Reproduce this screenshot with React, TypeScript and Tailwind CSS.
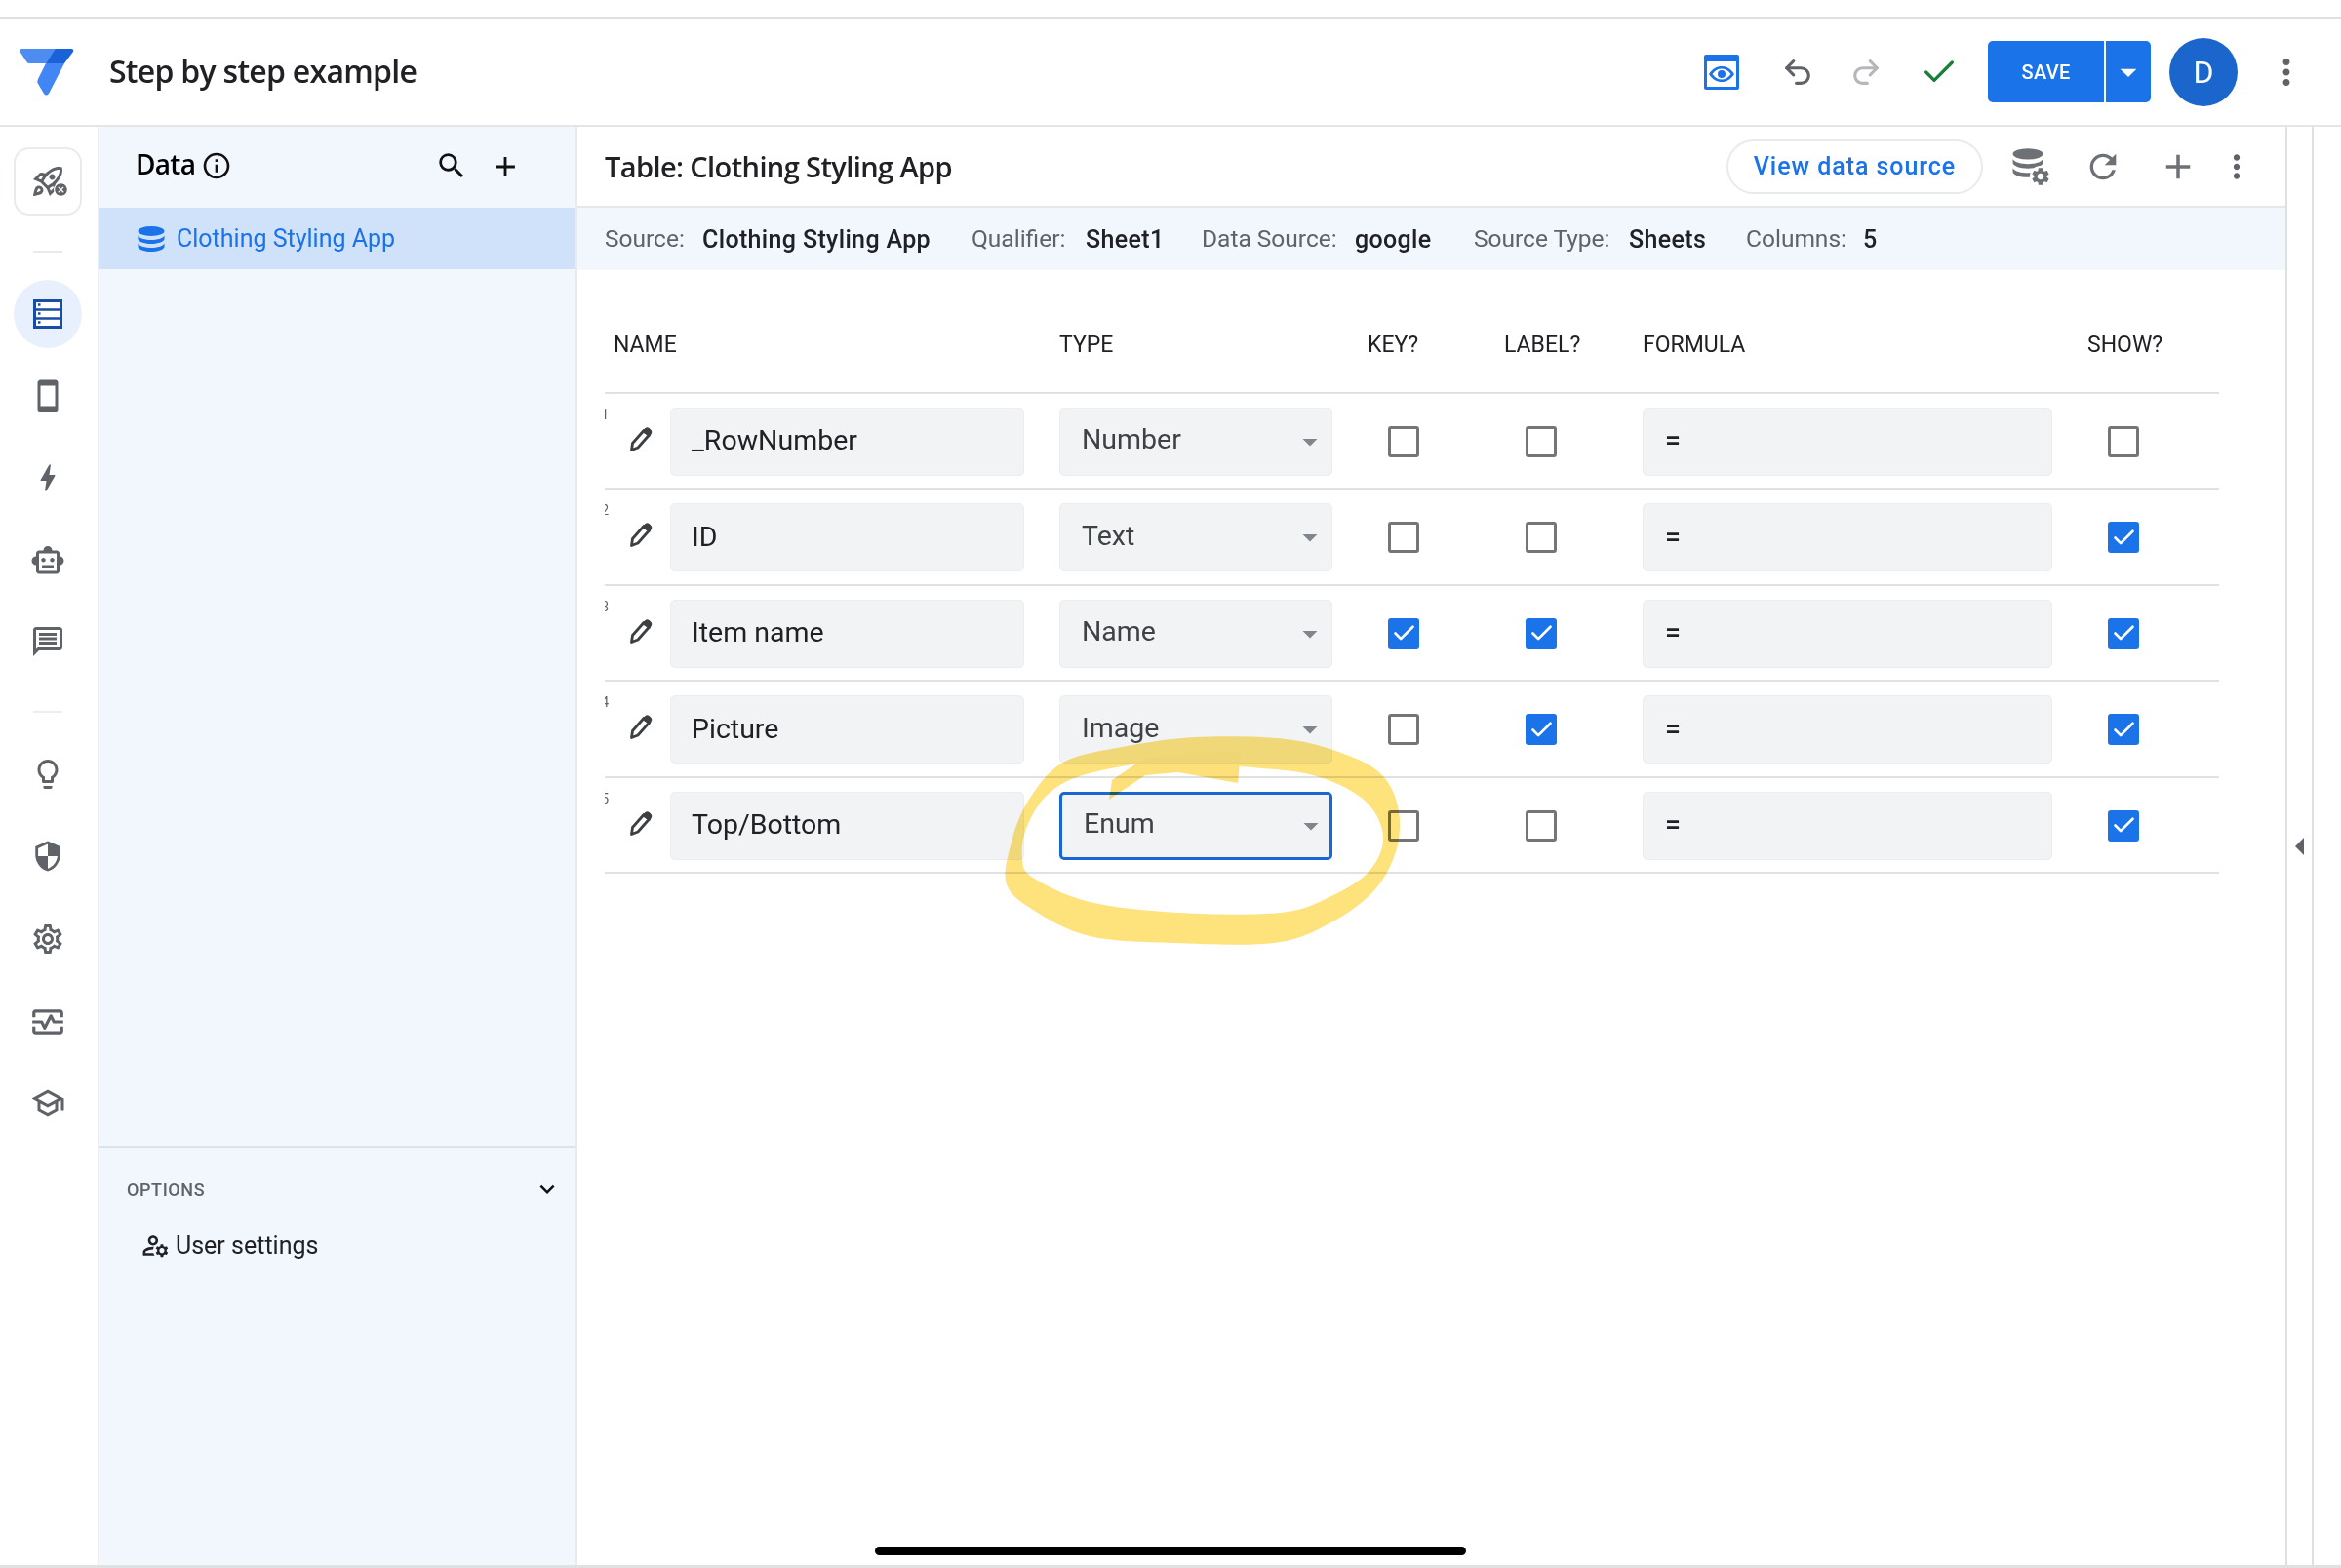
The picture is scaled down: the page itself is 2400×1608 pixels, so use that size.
import React from "react";
import { Undo2, Redo2, Check } from "lucide-react";
import {
  MdSearch, MdAdd, MdMoreVert, MdOutlineLightbulb, MdSecurity, MdOutlineSettings, MdOutlineMonitorHeart,
  MdOutlineSchool, MdOutlineSmartToy, MdOutlineMessage, MdBolt, MdInfoOutline, MdRefresh, MdArrowDropDown,
  MdOutlineSmartphone, MdOutlineRocketLaunch, MdOutlineManageAccounts, MdKeyboardArrowDown, MdCancel, MdSettings,
} from "react-icons/md";

function smooth(p: number[][]) {
  const n = p.length;
  let d = `M${p[0][0]} ${p[0][1]}`;
  for (let i = 0; i < n; i++) {
    const a = p[(i - 1 + n) % n], b = p[i], c = p[(i + 1) % n], e = p[(i + 2) % n];
    d += ` C${b[0] + (c[0] - a[0]) / 6} ${b[1] + (c[1] - a[1]) / 6} ${c[0] - (e[0] - b[0]) / 6} ${c[1] - (e[1] - b[1]) / 6} ${c[0]} ${c[1]}`;
  }
  return d + "Z";
}
const outer = [[1145,767],[1226,756],[1318,758],[1375,772],[1415,793],[1433,827],[1432,870],[1409,913],[1363,947],[1306,967],[1203,967],[1117,960],[1059,933],[1032,907],[1036,867],[1053,823],[1088,783]];
const inner = [[1117,793],[1076,813],[1053,847],[1048,880],[1059,900],[1117,925],[1208,936],[1312,936],[1363,920],[1404,893],[1418,857],[1398,820],[1346,795],[1272,786],[1200,780]];

function Highlight() {
  return (
    <svg className="absolute left-0 top-0 pointer-events-none mix-blend-multiply" width="2400" height="1608">
      <path d={smooth(outer) + " " + smooth(inner)} fill="#fee27c" fillRule="evenodd" />
      <path d="M1137 820 L1140 800 L1174 777 L1272 770 L1269 803 L1208 792 L1174 795 Z" fill="#fde07a" />
    </svg>
  );
}

function Logo() {
  return (
    <svg width="56" height="50" viewBox="0 0 56 50">
      <path d="M2 1 H38 L27 16 H10 Q8 16 7 14 L0.500 4 Q0 1 2 1Z" fill="#4d8cf0" />
      <path d="M27 16 H46 L30 47 Q27 50 25 47 L18.500 36 Q18 34 19 32 Z" fill="#4285f4" />
      <path d="M37 1 H53 Q56 1 55 4 L46 16 H27 Z" fill="#1a62d8" />
    </svg>
  );
}

function Pencil() {
  return (
    <svg width="24" height="26" viewBox="0 0 24 26" className="ml-[25px] -mt-[4px]">
      <path d="M2.500 23.500 L3.500 16.500 L15 3.500 L20.500 8 L9 21 Z" fill="#fff" stroke="#3c4043" strokeWidth="2.800" strokeLinejoin="round" />
      <path d="M14 4.500 L17 1.500 Q18.500 0.500 20 1.500 L22 3.500 Q23 5 22 6.500 L20.500 9 Z" fill="#3c4043" stroke="#3c4043" strokeWidth="1.500" strokeLinejoin="round" />
    </svg>
  );
}

function NavItem({ children, active }: { children: React.ReactNode; active?: boolean }) {
  return (
    <div className={`h-[70px] w-[70px] flex items-center justify-center rounded-full ${active ? "bg-[#e8f0fe]" : ""}`}>
      {children}
    </div>
  );
}

function TableIcon() {
  return (
    <svg width="30" height="30" viewBox="0 0 30 30">
      <rect x="1.5" y="1.5" width="27" height="27" fill="#fff" stroke="#174ea6" strokeWidth="3" />
      <path d="M1 10.5H29M1 19.5H29" stroke="#174ea6" strokeWidth="2.5" />
      <path d="M5 5.5h2.5M5 14.5h2.5M5 23.5h2.5" stroke="#174ea6" strokeWidth="2.5" />
    </svg>
  );
}

function Db({ color, w = 28, h = 26 }: { color: string; w?: number; h?: number }) {
  return (
    <svg width={w} height={h} viewBox="0 0 28 26" fill={color}>
      <ellipse cx="14" cy="5" rx="13.5" ry="5" />
      <path d="M.5 9.5C2 12.5 8 14 14 14s12-1.500 13.500-4.500V13c0 2.500-6 5-13.500 5S.5 15.500.5 13Z" />
      <path d="M.5 17.500C2 20.500 8 22 14 22s12-1.500 13.500-4.500V21c0 2.500-6 5-13.500 5S.5 23.500.5 21Z" />
    </svg>
  );
}

type Row = { n: string; name: string; type: string; key: boolean; label: boolean; show: boolean; focus?: boolean };
const rows: Row[] = [
  { n: "1", name: "_RowNumber", type: "Number", key: false, label: false, show: false },
  { n: "2", name: "ID", type: "Text", key: false, label: false, show: true },
  { n: "3", name: "Item name", type: "Name", key: true, label: true, show: true },
  { n: "4", name: "Picture", type: "Image", key: false, label: true, show: true },
  { n: "5", name: "Top/Bottom", type: "Enum", key: false, label: false, show: true, focus: true },
];

function Box({ on }: { on: boolean }) {
  return on ? (
    <div className="ml-[21px] h-[32px] w-[32px] rounded-[3px] bg-[#1a73e8] flex items-center justify-center">
      <Check size={27} color="#fff" strokeWidth={2.4} />
    </div>
  ) : (
    <div className="ml-[21px] h-[32px] w-[32px] rounded-[3px] border-[3px] border-[#757575]" />
  );
}

function Field({ children, className = "", focus }: { children: React.ReactNode; className?: string; focus?: boolean }) {
  return (
    <div className={`h-[70px] flex items-center rounded-[5px] bg-[#f1f3f4] text-[28.5px] ${focus ? "border-[3px] border-[#1a66d2]" : "border border-[#ebedef]"} ${className}`}>
      {children}
    </div>
  );
}

function TableRow({ r }: { r: Row }) {
  return (
    <div className="grid grid-cols-[67px_399px_316px_141px_141px_456px_1fr] items-center h-[98.5px] pt-[2px] border-b-2 border-[#dfe1e3]">
      <div className="h-full relative flex items-center">
        <span className="absolute left-0 top-[10px] w-[4px] overflow-hidden text-[14px] leading-[18px] text-[#5f6368] flex justify-end">{r.n}</span>
        <Pencil />
      </div>
      <Field className="w-[363px] pl-[21px] text-[#202124]">{r.name}</Field>
      <Field focus={r.focus} className={`w-[280px] justify-between text-[#3f4245] ${r.focus ? "pl-[22px] pr-[1px]" : "pl-[22px] pr-[4px]"}`}>
        <span className="-mt-[2px]">{r.type}</span>
        <MdArrowDropDown size={36} color="#80868b" />
      </Field>
      <Box on={r.key} />
      <Box on={r.label} />
      <Field className="w-[420px] pl-[22px] text-[#202124] font-medium">=</Field>
      <Box on={r.show} />
    </div>
  );
}

function Info({ k, v, kw, gap }: { k: string; v: string; kw: number; gap: number }) {
  return (
    <div className="flex" style={{ width: gap }}>
      <span className="text-[#5f6368]" style={{ width: kw }}>{k}</span>
      <span className="text-[#202124] font-medium text-[25px] tracking-[0.35px]">{v}</span>
    </div>
  );
}

export default function App() {
  return (
    <div className="relative w-[2400px] h-[1608px] overflow-hidden bg-white flex flex-col text-[#202124] font-['Roboto',sans-serif]">
      <div className="h-[19px] shrink-0 border-b-2 border-[#e0e0e0]" />
      <header className="h-[111px] shrink-0 border-b-2 border-[#e4e5e7] flex items-center pl-[20px]">
        <Logo />
        <span className="ml-[36px] -mt-[2px] text-[32px] font-semibold font-['Open_Sans',sans-serif] tracking-[-0.72px] text-[#202124]">Step by step example</span>
        <div className="ml-auto flex items-center h-full">
          <svg width="36" height="36" viewBox="0 0 36 36">
            <rect x="0" y="0" width="36" height="36" rx="2" fill="#1a73e8" />
            <rect x="3" y="7" width="30" height="26" fill="#fff" />
            <path d="M5 20c3.500-5.500 8-8 13-8s9.500 2.500 13 8c-3.500 5.500-8 8-13 8s-9.500-2.500-13-8Z" fill="#1a73e8" />
            <path d="M8.500 20c2.800-4 6-5.500 9.500-5.500s6.700 1.500 9.500 5.500c-2.800 4-6 5.500-9.500 5.500S11.300 24 8.500 20Z" fill="#fff" />
            <circle cx="18" cy="20" r="4" fill="#1a73e8" />
          </svg>
          <Undo2 size={34} color="#5f6368" strokeWidth={2.2} className="ml-[43px]" />
          <Redo2 size={34} color="#b5b7ba" strokeWidth={2.2} className="ml-[36px]" />
          <Check size={40} color="#188038" strokeWidth={2} className="ml-[38px] mr-[1px]" />
          <div className="ml-[29px] h-[63px] w-[167px] rounded-[5px] bg-[#1a73e8] flex items-center text-white">
            <span className="w-[119px] text-center text-[20px] font-medium tracking-[0.3px]">SAVE</span>
            <div className="h-full border-l-2 border-white flex-1 flex items-center justify-center">
              <MdArrowDropDown size={40} color="#fff" />
            </div>
          </div>
          <div className="ml-[19px] h-[70px] w-[70px] rounded-full bg-[#1a66cc] text-white text-[32px] flex items-center justify-center">D</div>
          <MdMoreVert size={42} color="#5f6368" className="ml-[29px] mr-[35px]" />
        </div>
      </header>

      <div className="flex-1 flex min-h-0">
        <nav className="w-[102px] shrink-0 border-r-2 border-[#eceef1] flex flex-col items-center pr-[2px]">
          <div className="mt-[21px] h-[70px] w-[70px] rounded-[16px] border-2 border-[#e8eaed] flex items-center justify-center relative">
            <MdOutlineRocketLaunch size={36} color="#5f6368" />
            <span className="absolute left-[39px] top-[34px] bg-white rounded-full"><MdCancel size={15} color="#5f6368" /></span>
          </div>
          <div className="mt-[36px] mb-[28px] w-[30px] border-t-2 border-[#e8eaed]" />
          <NavItem active><TableIcon /></NavItem>
          <div className="mt-[14px]"><NavItem><MdOutlineSmartphone size={36} color="#5f6368" /></NavItem></div>
          <div className="mt-[14px]"><NavItem><MdBolt size={36} color="#5f6368" /></NavItem></div>
          <div className="mt-[15px]"><NavItem><MdOutlineSmartToy size={36} color="#5f6368" /></NavItem></div>
          <div className="mt-[13px]"><NavItem><MdOutlineMessage size={36} color="#5f6368" /></NavItem></div>
          <div className="mt-[36px] mb-[28px] w-[30px] border-t-2 border-[#eceef0]" />
          <NavItem><MdOutlineLightbulb size={36} color="#5f6368" /></NavItem>
          <div className="mt-[14px]"><NavItem><MdSecurity size={34} color="#5f6368" /></NavItem></div>
          <div className="mt-[15px]"><NavItem><MdOutlineSettings size={36} color="#5f6368" /></NavItem></div>
          <div className="mt-[15px]"><NavItem><MdOutlineMonitorHeart size={38} color="#5f6368" /></NavItem></div>
          <div className="mt-[13px]"><NavItem><MdOutlineSchool size={36} color="#5f6368" /></NavItem></div>
        </nav>

        <aside className="w-[490px] shrink-0 bg-[#f2f6fd] border-r-2 border-[#e8eaed] flex flex-col">
          <div className="h-[83px] shrink-0 flex items-center pl-[37px]">
            <span className="-mt-[7px] text-[28px] font-semibold font-['Open_Sans',sans-serif] tracking-[-0.7px] text-black">Data</span>
            <MdInfoOutline size={32} color="#111" className="ml-[6px] -mt-[3px]" />
            <MdSearch size={34} color="#111" className="ml-[208px] -mt-[3px]" />
            <MdAdd size={34} color="#111" className="ml-[21px] -mt-[1px]" />
          </div>
          <div className="h-[63px] shrink-0 bg-[#d0e2fa] flex items-center pl-[39px] text-[#1a73e8] text-[25px]">
            <Db color="#1a73e8" />
            <span className="ml-[12px]">Clothing Styling App</span>
          </div>
          <div className="mt-auto h-[430px] border-t-2 border-[#d8e3f1] shrink-0">
            <div className="mt-[27px] flex items-center justify-between pl-[28px] pr-[14px]">
              <span className="text-[18px] font-medium tracking-[0.6px] text-[#5f6368]">OPTIONS</span>
              <MdKeyboardArrowDown size={30} color="#111" />
            </div>
            <div className="mt-[25px] ml-[42px] flex items-center text-[25px] text-[#202124]">
              <MdOutlineManageAccounts size={31} />
              <span className="ml-[5px]">User settings</span>
            </div>
          </div>
        </aside>

        <main className="w-[1753px] shrink-0 border-r-2 border-[#e0e0e0] flex flex-col">
          <div className="h-[83px] shrink-0 border-b-2 border-[#e6e7e9] flex items-center pl-[28px]">
            <span className="text-[29px] font-semibold font-['Open_Sans',sans-serif] tracking-[-0.6px] text-[#202124]">Table: Clothing Styling App</span>
            <div className="ml-auto flex items-center">
              <div className="h-[56px] w-[263px] rounded-full border-2 border-[#e8eaed] flex items-center justify-center text-[#1a73e8] text-[25px] font-medium tracking-[0.95px]">View data source</div>
              <div className="ml-[30px] relative w-[40px] h-[42px]">
                <Db color="#6d7175" w={32} h={34} />
                <span className="absolute left-[18px] top-[20px] bg-white rounded-full"><MdSettings size={22} color="#6d7175" /></span>
              </div>
              <MdRefresh size={40} color="#6d7175" className="ml-[33px]" />
              <MdAdd size={42} color="#6d7175" className="ml-[36px]" />
              <MdMoreVert size={38} color="#5f6368" className="ml-[20px] mr-[31px]" />
            </div>
          </div>
          <div className="h-[64px] shrink-0 bg-[#f2f6fd] flex items-center pl-[28px] pt-[2px] text-[24.5px]">
            <Info k="Source:" v="Clothing Styling App" kw={100} gap={376} />
            <Info k="Qualifier:" v="Sheet1" kw={117} gap={236} />
            <Info k="Data Source:" v="google" kw={157} gap={279} />
            <Info k="Source Type:" v="Sheets" kw={159} gap={279} />
            <Info k="Columns:" v="5" kw={120} gap={200} />
          </div>
          <div className="pl-[28px] pr-[68px]">
            <div className="h-[126.5px] grid grid-cols-[457px_316px_140px_142px_456px_1fr] items-center pl-[9px] pt-[29px] border-b-2 border-[#dfe1e3] text-[23px] text-[#202124]">
              <span>NAME</span><span>TYPE</span><span>KEY?</span><span>LABEL?</span><span>FORMULA</span><span>SHOW?</span>
            </div>
            {rows.map((r) => <TableRow key={r.n} r={r} />)}
          </div>
        </main>

        <div className="w-[27px] shrink-0 border-r-2 border-[#e0e0e0] flex items-center justify-center">
          <div className="h-0 w-0 border-y-[9px] border-y-transparent border-r-[9px] border-r-[#5f6368]" />
        </div>
      </div>

      <div className="h-[3px] shrink-0 bg-[#dfe1e3]" />
      <Highlight />
      <div className="absolute left-[897px] top-[1586px] h-[9px] w-[606px] rounded-full bg-black" />
    </div>
  );
}
